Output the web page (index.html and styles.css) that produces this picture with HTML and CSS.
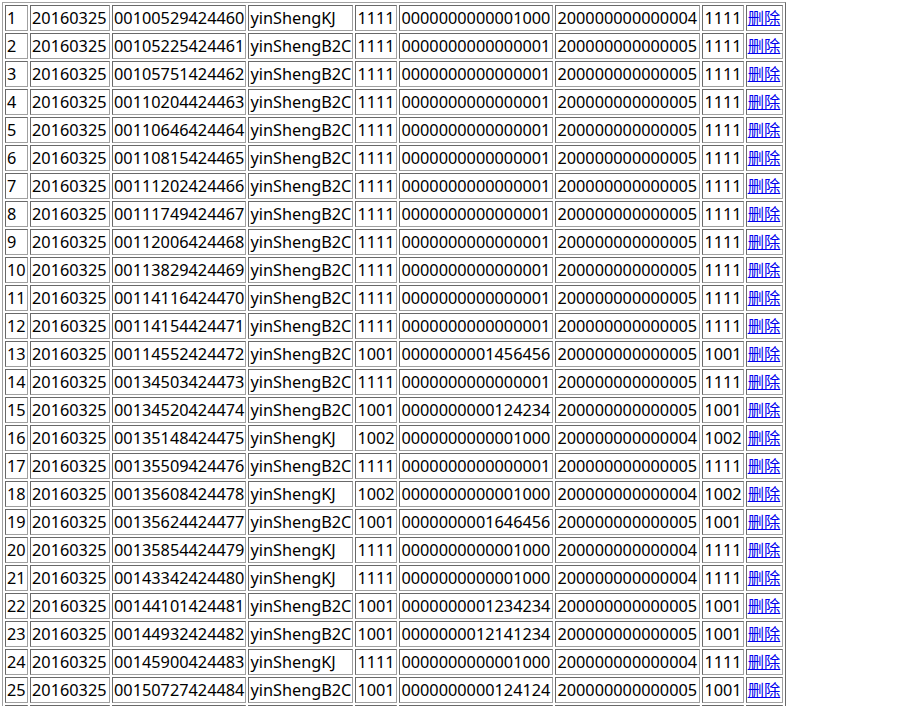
FILE: index.html
```html
<!DOCTYPE html>
<html>
<head>
<meta charset="utf-8">
<link rel="stylesheet" href="styles.css">
</head>
<body>
<table class="grid">
<tbody>
<tr><td>1</td><td>20160325</td><td>00100529424460</td><td>yinShengKJ</td><td>1111</td><td>0000000000001000</td><td>200000000000004</td><td>1111</td><td><a href="#">删除</a></td></tr>
<tr><td>2</td><td>20160325</td><td>00105225424461</td><td>yinShengB2C</td><td>1111</td><td>0000000000000001</td><td>200000000000005</td><td>1111</td><td><a href="#">删除</a></td></tr>
<tr><td>3</td><td>20160325</td><td>00105751424462</td><td>yinShengB2C</td><td>1111</td><td>0000000000000001</td><td>200000000000005</td><td>1111</td><td><a href="#">删除</a></td></tr>
<tr><td>4</td><td>20160325</td><td>00110204424463</td><td>yinShengB2C</td><td>1111</td><td>0000000000000001</td><td>200000000000005</td><td>1111</td><td><a href="#">删除</a></td></tr>
<tr><td>5</td><td>20160325</td><td>00110646424464</td><td>yinShengB2C</td><td>1111</td><td>0000000000000001</td><td>200000000000005</td><td>1111</td><td><a href="#">删除</a></td></tr>
<tr><td>6</td><td>20160325</td><td>00110815424465</td><td>yinShengB2C</td><td>1111</td><td>0000000000000001</td><td>200000000000005</td><td>1111</td><td><a href="#">删除</a></td></tr>
<tr><td>7</td><td>20160325</td><td>00111202424466</td><td>yinShengB2C</td><td>1111</td><td>0000000000000001</td><td>200000000000005</td><td>1111</td><td><a href="#">删除</a></td></tr>
<tr><td>8</td><td>20160325</td><td>00111749424467</td><td>yinShengB2C</td><td>1111</td><td>0000000000000001</td><td>200000000000005</td><td>1111</td><td><a href="#">删除</a></td></tr>
<tr><td>9</td><td>20160325</td><td>00112006424468</td><td>yinShengB2C</td><td>1111</td><td>0000000000000001</td><td>200000000000005</td><td>1111</td><td><a href="#">删除</a></td></tr>
<tr><td>10</td><td>20160325</td><td>00113829424469</td><td>yinShengB2C</td><td>1111</td><td>0000000000000001</td><td>200000000000005</td><td>1111</td><td><a href="#">删除</a></td></tr>
<tr><td>11</td><td>20160325</td><td>00114116424470</td><td>yinShengB2C</td><td>1111</td><td>0000000000000001</td><td>200000000000005</td><td>1111</td><td><a href="#">删除</a></td></tr>
<tr><td>12</td><td>20160325</td><td>00114154424471</td><td>yinShengB2C</td><td>1111</td><td>0000000000000001</td><td>200000000000005</td><td>1111</td><td><a href="#">删除</a></td></tr>
<tr><td>13</td><td>20160325</td><td>00114552424472</td><td>yinShengB2C</td><td>1001</td><td>0000000001456456</td><td>200000000000005</td><td>1001</td><td><a href="#">删除</a></td></tr>
<tr><td>14</td><td>20160325</td><td>00134503424473</td><td>yinShengB2C</td><td>1111</td><td>0000000000000001</td><td>200000000000005</td><td>1111</td><td><a href="#">删除</a></td></tr>
<tr><td>15</td><td>20160325</td><td>00134520424474</td><td>yinShengB2C</td><td>1001</td><td>0000000000124234</td><td>200000000000005</td><td>1001</td><td><a href="#">删除</a></td></tr>
<tr><td>16</td><td>20160325</td><td>00135148424475</td><td>yinShengKJ</td><td>1002</td><td>0000000000001000</td><td>200000000000004</td><td>1002</td><td><a href="#">删除</a></td></tr>
<tr><td>17</td><td>20160325</td><td>00135509424476</td><td>yinShengB2C</td><td>1111</td><td>0000000000000001</td><td>200000000000005</td><td>1111</td><td><a href="#">删除</a></td></tr>
<tr><td>18</td><td>20160325</td><td>00135608424478</td><td>yinShengKJ</td><td>1002</td><td>0000000000001000</td><td>200000000000004</td><td>1002</td><td><a href="#">删除</a></td></tr>
<tr><td>19</td><td>20160325</td><td>00135624424477</td><td>yinShengB2C</td><td>1001</td><td>0000000001646456</td><td>200000000000005</td><td>1001</td><td><a href="#">删除</a></td></tr>
<tr><td>20</td><td>20160325</td><td>00135854424479</td><td>yinShengKJ</td><td>1111</td><td>0000000000001000</td><td>200000000000004</td><td>1111</td><td><a href="#">删除</a></td></tr>
<tr><td>21</td><td>20160325</td><td>00143342424480</td><td>yinShengKJ</td><td>1111</td><td>0000000000001000</td><td>200000000000004</td><td>1111</td><td><a href="#">删除</a></td></tr>
<tr><td>22</td><td>20160325</td><td>00144101424481</td><td>yinShengB2C</td><td>1001</td><td>0000000001234234</td><td>200000000000005</td><td>1001</td><td><a href="#">删除</a></td></tr>
<tr><td>23</td><td>20160325</td><td>00144932424482</td><td>yinShengB2C</td><td>1001</td><td>0000000012141234</td><td>200000000000005</td><td>1001</td><td><a href="#">删除</a></td></tr>
<tr><td>24</td><td>20160325</td><td>00145900424483</td><td>yinShengKJ</td><td>1111</td><td>0000000000001000</td><td>200000000000004</td><td>1111</td><td><a href="#">删除</a></td></tr>
<tr><td>25</td><td>20160325</td><td>00150727424484</td><td>yinShengB2C</td><td>1001</td><td>0000000000124124</td><td>200000000000005</td><td>1001</td><td><a href="#">删除</a></td></tr>
<tr class="next"><td></td><td></td><td></td><td></td><td></td><td></td><td></td><td></td><td></td></tr>
</tbody>
</table>
</body>
</html>
```
FILE: styles.css
```css
body {
  margin: 2px;
  background: #ffffff;
  font-family: "Noto Sans", "Noto Sans CJK SC", sans-serif;
  font-size: 16.3px;
  color: #000000;
}
.grid {
  border-collapse: separate;
  border-spacing: 2px;
  border-width: 1px;
  border-style: solid;
  border-color: #a0a0a0 #696969 #696969 #a0a0a0;
}
.grid td {
  border-width: 1px;
  border-style: solid;
  border-color: #696969 #a0a0a0 #a0a0a0 #696969;
  padding: 1px;
  line-height: 22px;
  white-space: nowrap;
  text-align: left;
  vertical-align: middle;
}
.grid .next td {
  height: 22px;
}
.grid td:nth-child(1) { width: 19px; }
.grid td:nth-child(2) { width: 76px; }
.grid td:nth-child(3) { width: 130px; }
.grid td:nth-child(4) { width: 101px; }
.grid td:nth-child(5) { width: 38px; }
.grid td:nth-child(6) { width: 150px; }
.grid td:nth-child(7) { width: 141px; }
.grid td:nth-child(8) { width: 36px; }
.grid td:nth-child(9) { width: 33px; }
.grid a {
  color: #0000ee;
  text-decoration: underline;
}
```
